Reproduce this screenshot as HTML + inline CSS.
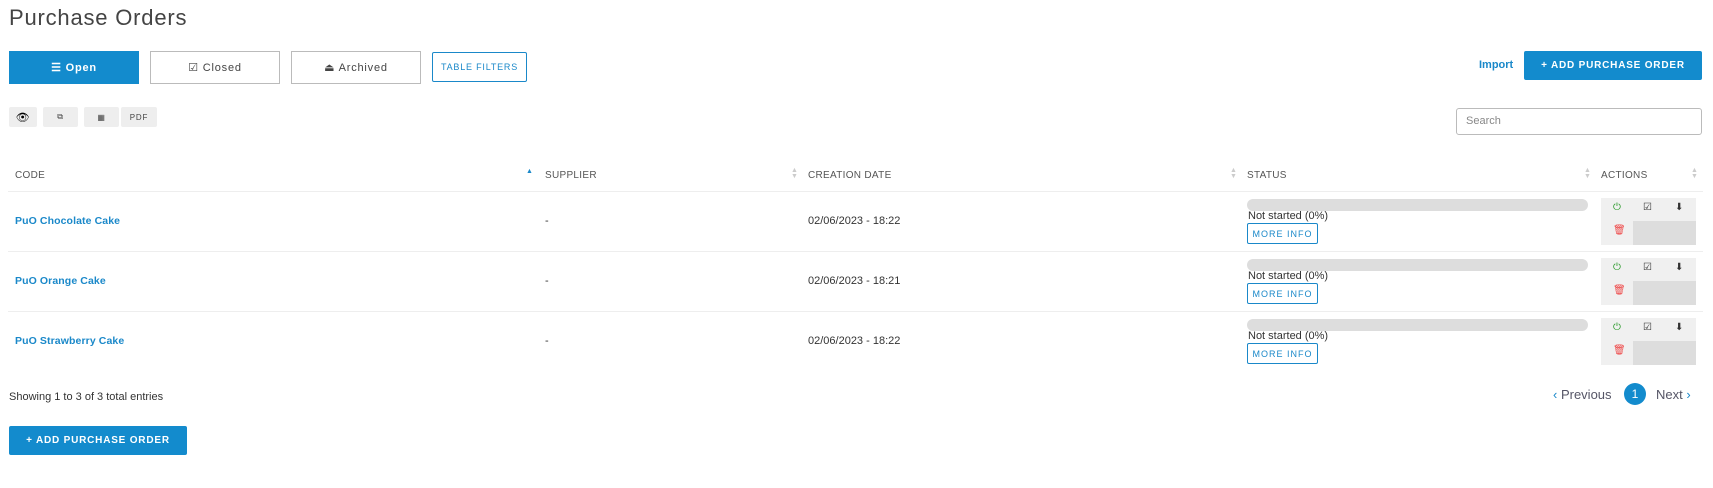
<!DOCTYPE html>
<html><head><meta charset="utf-8"><style>
*{box-sizing:border-box;margin:0;padding:0}
body{width:1713px;height:488px;background:#fff;font-family:"Liberation Sans",sans-serif;color:#333;position:relative;overflow:hidden;font-size:11px}
.a{position:absolute}
h1{position:absolute;left:9px;top:5px;font-size:22px;font-weight:normal;color:#444;letter-spacing:.8px}
.btn{position:absolute;display:flex;align-items:center;justify-content:center;font-size:11px;letter-spacing:.8px}
.tab{border:1px solid #bbb;color:#444;background:#fff;top:51px;height:33px;width:130px}
.sm{top:107px;height:20px;background:#eee;border-radius:2px;font-size:8px;color:#444}
.th{position:absolute;top:170px;font-size:10px;color:#555;letter-spacing:.3px}
.sort{position:absolute;top:168px;font-size:7px;color:#ccc;line-height:6px}
.line{position:absolute;left:8px;width:1695px;height:1px;background:#eee}
.code{position:absolute;left:15px;color:#1a88c9;font-weight:bold;font-size:10.5px;letter-spacing:.1px}
.bar{position:absolute;left:1247px;width:341px;height:12px;background:#ddd;border-radius:6px}
.ns{position:absolute;left:1248px;font-size:11px;color:#333}
.mi{position:absolute;left:1247px;width:71px;height:21px;border:1px solid #1a88c9;border-radius:2px;color:#1a88c9;font-size:9px;letter-spacing:1px;display:flex;align-items:center;justify-content:center}
.act{position:absolute;left:1601px;width:95px;height:47px;background:#f0f0f0}
.act .g{position:absolute;left:32px;top:23px;width:63px;height:24px;background:#ddd}
.act span{position:absolute;font-size:10px;top:4px}
</style></head><body>
<h1>Purchase Orders</h1>
<div class="btn" style="left:9px;top:51px;width:130px;height:33px;background:#138bcd;color:#fff;font-weight:bold">☰ Open</div>
<div class="btn tab" style="left:150px">☑ Closed</div>
<div class="btn tab" style="left:291px">⏏ Archived</div>
<div class="btn" style="left:432px;top:52px;width:95px;height:30px;border:1px solid #1a88c9;border-radius:2px;color:#1a88c9;font-size:9px">TABLE FILTERS</div>
<div class="a" style="left:1479px;top:59px;color:#1a88c9;font-weight:bold;font-size:11px">Import</div>
<div class="btn" style="left:1524px;top:51px;width:178px;height:29px;background:#138bcd;color:#fff;font-weight:bold;border-radius:2px;font-size:10px">+ ADD PURCHASE ORDER</div>
<div class="btn sm" style="left:9px;width:28px;font-size:11px;color:#000">👁</div>
<div class="btn sm" style="left:43px;width:35px">⧉</div>
<div class="btn sm" style="left:84px;width:35px">▦</div>
<div class="btn sm" style="left:121px;width:36px">PDF</div>
<div class="a" style="left:1456px;top:108px;width:246px;height:27px;border:1px solid #bbb;border-radius:3px;padding:6px 9px;color:#888;font-size:11px">Search</div>

<div class="th" style="left:15px">CODE</div>
<div class="a" style="left:526px;top:168px;font-size:7px;color:#1a88c9">▲</div>
<div class="th" style="left:545px">SUPPLIER</div>
<div class="sort" style="left:791px">▲<br>▼</div>
<div class="th" style="left:808px">CREATION DATE</div>
<div class="sort" style="left:1230px">▲<br>▼</div>
<div class="th" style="left:1247px">STATUS</div>
<div class="sort" style="left:1584px">▲<br>▼</div>
<div class="th" style="left:1601px">ACTIONS</div>
<div class="sort" style="left:1691px">▲<br>▼</div>
<div class="line" style="top:191px"></div>
<div class="line" style="top:251px"></div>
<div class="line" style="top:311px"></div>

<div class="code" style="top:215px">PuO Chocolate Cake</div>
<div class="code" style="top:275px">PuO Orange Cake</div>
<div class="code" style="top:335px">PuO Strawberry Cake</div>
<div class="a" style="left:545px;top:215px">-</div>
<div class="a" style="left:545px;top:275px">-</div>
<div class="a" style="left:545px;top:335px">-</div>
<div class="a" style="left:808px;top:215px">02/06/2023 - 18:22</div>
<div class="a" style="left:808px;top:275px">02/06/2023 - 18:21</div>
<div class="a" style="left:808px;top:335px">02/06/2023 - 18:22</div>

<div class="bar" style="top:199px"></div><div class="ns" style="top:210px">Not started (0%)</div><div class="mi" style="top:223px">MORE INFO</div>
<div class="bar" style="top:259px"></div><div class="ns" style="top:270px">Not started (0%)</div><div class="mi" style="top:283px">MORE INFO</div>
<div class="bar" style="top:319px"></div><div class="ns" style="top:330px">Not started (0%)</div><div class="mi" style="top:343px">MORE INFO</div>

<div class="act" style="top:198px"><div class="g"></div><span style="left:12px;color:#2a9a2a">⏻</span><span style="left:42px">☑</span><span style="left:74px">⬇</span><span style="left:12px;top:27px;color:#e44">🗑</span></div>
<div class="act" style="top:258px"><div class="g"></div><span style="left:12px;color:#2a9a2a">⏻</span><span style="left:42px">☑</span><span style="left:74px">⬇</span><span style="left:12px;top:27px;color:#e44">🗑</span></div>
<div class="act" style="top:318px"><div class="g"></div><span style="left:12px;color:#2a9a2a">⏻</span><span style="left:42px">☑</span><span style="left:74px">⬇</span><span style="left:12px;top:27px;color:#e44">🗑</span></div>

<div class="a" style="left:9px;top:391px;font-size:11px;color:#333">Showing 1 to 3 of 3 total entries</div>
<div class="a" style="left:1553px;top:387px;font-size:13px;color:#556"><span style="color:#1a88c9">‹</span> Previous</div>
<div class="a" style="left:1624px;top:383px;width:22px;height:22px;border-radius:50%;background:#138bcd;color:#fff;font-size:12px;display:flex;align-items:center;justify-content:center">1</div>
<div class="a" style="left:1656px;top:387px;font-size:13px;color:#556">Next <span style="color:#1a88c9">›</span></div>
<div class="btn" style="left:9px;top:426px;width:178px;height:29px;background:#138bcd;color:#fff;font-weight:bold;border-radius:2px;font-size:10px">+ ADD PURCHASE ORDER</div>
</body></html>
